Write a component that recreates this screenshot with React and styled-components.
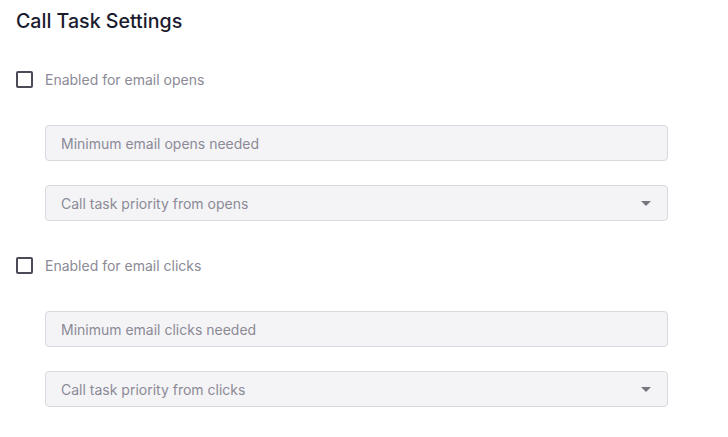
import styled, { createGlobalStyle } from "styled-components";

const GlobalStyle = createGlobalStyle`
  body {
    margin: 0;
    background: #ffffff;
    font-family: Inter, "Noto Sans", sans-serif;
  }
`;

const Page = styled.div`
  padding: 9px 60px 0 16px;
`;

const Title = styled.h2`
  margin: 0;
  font-size: 19.6px;
  line-height: 25px;
  font-weight: 500;
  color: #1b1b2f;
`;

const Section = styled.div`
  margin-top: ${(p) => (p.first ? "36px" : "35px")};
`;

const CheckRow = styled.label`
  display: flex;
  align-items: center;
  gap: 12px;
  height: 18px;
  cursor: pointer;
`;

const Box = styled.span`
  box-sizing: border-box;
  width: 17px;
  height: 17px;
  border: 2px solid #4b4b57;
  border-radius: 2px;
  background: #fff;
`;

const Label = styled.span`
  font-size: 14px;
  color: #8b8a96;
`;

const Fields = styled.div`
  display: flex;
  flex-direction: column;
  gap: 24px;
  margin: 37px 0 0 29px;
`;

const Field = styled.div`
  box-sizing: border-box;
  height: 36px;
  display: flex;
  align-items: center;
  padding: 0 15px;
  background: #f4f4f7;
  border: 1px solid #d8d8de;
  border-radius: 4px;
  font-size: 14px;
  color: #8b8a95;
`;

const Caret = styled.span`
  margin-left: auto;
  width: 0;
  height: 0;
  border-left: 5px solid transparent;
  border-right: 5px solid transparent;
  border-top: 5px solid #77777f;
  margin-right: 1px;
`;

const groups = [
  { label: "Enabled for email opens", min: "Minimum email opens needed", prio: "Call task priority from opens" },
  { label: "Enabled for email clicks", min: "Minimum email clicks needed", prio: "Call task priority from clicks" },
];

export default function App() {
  return (
    <Page>
      <GlobalStyle />
      <Title>Call Task Settings</Title>
      {groups.map((g, i) => (
        <Section key={g.label} first={i === 0}>
          <CheckRow>
            <Box />
            <Label>{g.label}</Label>
          </CheckRow>
          <Fields>
            <Field>{g.min}</Field>
            <Field>
              {g.prio}
              <Caret />
            </Field>
          </Fields>
        </Section>
      ))}
    </Page>
  );
}
